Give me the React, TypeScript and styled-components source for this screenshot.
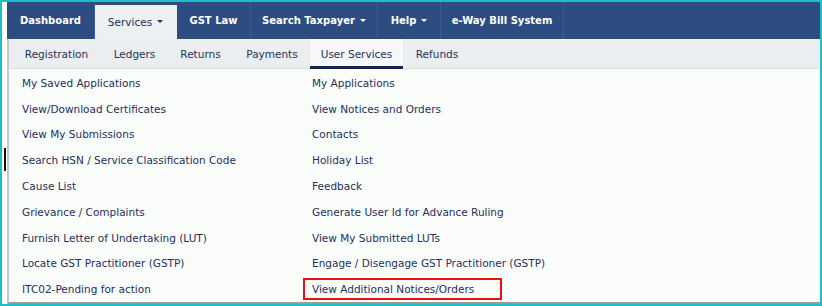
import styled, { createGlobalStyle } from "styled-components";

const Global = createGlobalStyle`
  html, body {
    margin: 0;
    padding: 0;
    background: #ffffff;
  }
  body {
    font-family: "DejaVu Sans", Verdana, sans-serif;
  }
`;

const Frame = styled.div`
  position: relative;
  width: 822px;
  height: 306px;
  box-sizing: border-box;
  border: 2px solid #1fbfc7;
  background: #ffffff;
  display: flex;
  flex-direction: column;
  padding-left: 5px;
  overflow: hidden;
`;

const TopBar = styled.nav`
  display: flex;
  height: 38px;
  background: #2c4c82;
`;

const TopItem = styled.div<{ $active?: boolean; $w: number }>`
  display: flex;
  align-items: center;
  justify-content: center;
  width: ${(p) => p.$w}px;
  margin-top: ${(p) => (p.$active ? "3px" : "0")};
  background: ${(p) => (p.$active ? "#edf0f3" : "transparent")};
  color: ${(p) => (p.$active ? "#23305c" : "#ffffff")};
  font-weight: ${(p) => (p.$active ? "normal" : "bold")};
  font-size: ${(p) => (p.$active ? "10.5px" : "10px")};
  border-right: 1px solid ${(p) => (p.$active ? "transparent" : "#3d5d92")};
  box-sizing: border-box;
  white-space: nowrap;
`;

const Caret = styled.span`
  display: inline-block;
  margin-left: 5px;
  width: 0;
  height: 0;
  border-left: 3px solid transparent;
  border-right: 3px solid transparent;
  border-top: 3px solid currentColor;
  vertical-align: middle;
`;

const Panel = styled.div`
  flex: 1;
  display: flex;
  flex-direction: column;
  border-left: 2px solid #c4c7c9;
  border-bottom: 2px solid #9c9a98;
`;

const SubBar = styled.div`
  display: flex;
  height: 30px;
  background: #ebeef1;
  border-bottom: 1px solid #dde0e3;
  box-sizing: border-box;
  padding-left: 2px;
`;

const SubItem = styled.div<{ $active?: boolean; $w: number }>`
  display: flex;
  align-items: center;
  justify-content: center;
  width: ${(p) => p.$w}px;
  font-size: 10.5px;
  color: #25315c;
  background: ${(p) => (p.$active ? "#f6f7f8" : "transparent")};
  border-bottom: 3px solid ${(p) => (p.$active ? "#14245a" : "transparent")};
  padding-top: 3px;
  margin-bottom: -1px;
  box-sizing: border-box;
  white-space: nowrap;
`;

const Content = styled.div`
  flex: 1;
  background: #fbfdfb;
  display: grid;
  grid-template-columns: 290px 1fr;
  grid-auto-rows: 25.8px;
  padding: 1px 0 0 13px;
`;

const MenuLink = styled.div`
  display: flex;
  align-items: center;
  font-size: 10.5px;
  color: #242f5e;
  white-space: nowrap;
`;

const Highlight = styled.span`
  border: 2px solid #ee0e0e;
  padding: 3px 26px 3px 7px;
  margin-left: -9px;
`;

const Cursor = styled.div`
  position: absolute;
  left: 2px;
  top: 146px;
  width: 2px;
  height: 23px;
  background: #111;
`;

const topItems = [
  { label: "Dashboard", w: 88 },
  { label: "Services", w: 82, active: true, caret: true },
  { label: "GST Law", w: 74 },
  { label: "Search Taxpayer", w: 127, caret: true },
  { label: "Help", w: 63, caret: true },
  { label: "e-Way Bill System", w: 123 },
];

const subItems = [
  { label: "Registration", w: 91 },
  { label: "Ledgers", w: 65 },
  { label: "Returns", w: 67 },
  { label: "Payments", w: 76 },
  { label: "User Services", w: 93, active: true },
  { label: "Refunds", w: 68 },
];

const left = [
  "My Saved Applications",
  "View/Download Certificates",
  "View My Submissions",
  "Search HSN / Service Classification Code",
  "Cause List",
  "Grievance / Complaints",
  "Furnish Letter of Undertaking (LUT)",
  "Locate GST Practitioner (GSTP)",
  "ITC02-Pending for action",
];

const right = [
  "My Applications",
  "View Notices and Orders",
  "Contacts",
  "Holiday List",
  "Feedback",
  "Generate User Id for Advance Ruling",
  "View My Submitted LUTs",
  "Engage / Disengage GST Practitioner (GSTP)",
  "View Additional Notices/Orders",
];

export default function App() {
  const rows = left.flatMap((l, i) => [
    <MenuLink key={"l" + i}>{l}</MenuLink>,
    <MenuLink key={"r" + i}>
      {i === right.length - 1 ? <Highlight>{right[i]}</Highlight> : right[i]}
    </MenuLink>,
  ]);
  return (
    <>
      <Global />
      <Frame>
        <TopBar>
          {topItems.map((t) => (
            <TopItem key={t.label} $w={t.w} $active={t.active}>
              {t.label}
              {t.caret && <Caret />}
            </TopItem>
          ))}
        </TopBar>
        <Panel>
          <SubBar>
            {subItems.map((s) => (
              <SubItem key={s.label} $w={s.w} $active={s.active}>
                {s.label}
              </SubItem>
            ))}
          </SubBar>
          <Content>{rows}</Content>
        </Panel>
        <Cursor />
      </Frame>
    </>
  );
}
